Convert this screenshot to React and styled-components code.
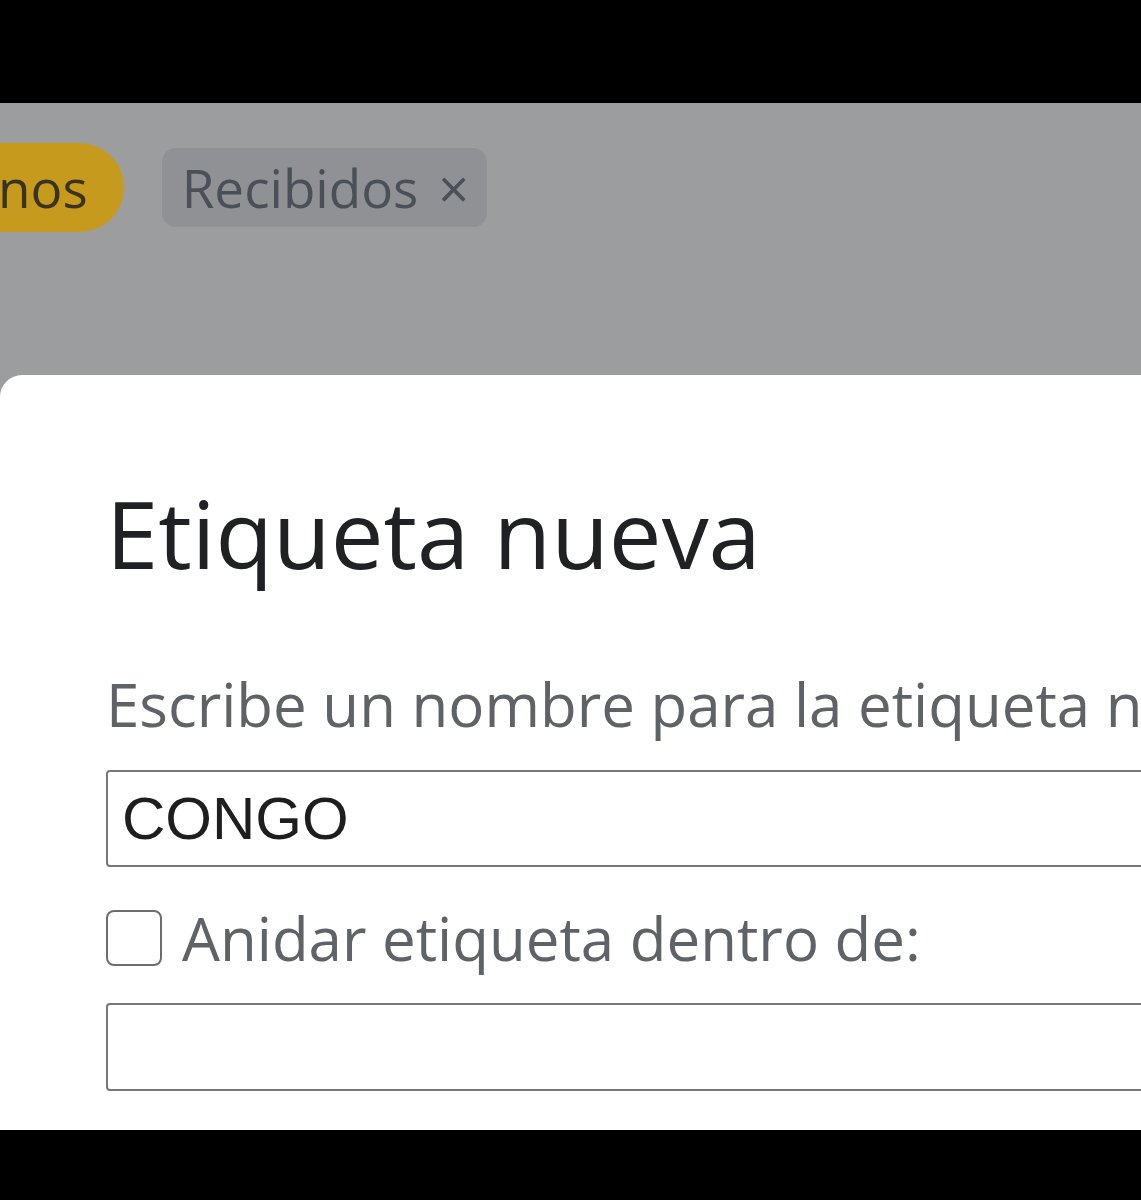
import styled, { createGlobalStyle } from "styled-components";

const GlobalStyle = createGlobalStyle`
  html, body {
    margin: 0;
    padding: 0;
    background: #000;
    overflow: hidden;
  }
`;

export default function App() {
  return (
    <>
      <GlobalStyle />
      <Page>
        <Frame>
          <ChipRow>
            <FilterChip>nos</FilterChip>
            <LabelChip>
              Recibidos <ChipClose>×</ChipClose>
            </LabelChip>
          </ChipRow>
          <Dialog>
            <Title>Etiqueta nueva</Title>
            <Hint>Escribe un nombre para la etiqueta nueva:</Hint>
            <TextField defaultValue="CONGO" />
            <CheckRow>
              <Box type="checkbox" />
              <CheckLabel>Anidar etiqueta dentro de:</CheckLabel>
            </CheckRow>
            <TextField $short />
          </Dialog>
        </Frame>
      </Page>
    </>
  );
}

const Page = styled.div`
  width: 1141px;
  height: 1200px;
  padding-top: 103px;
  box-sizing: border-box;
  background: #000;
`;

const Frame = styled.div`
  height: 1027px;
  overflow: hidden;
  background: #9c9d9f;
  display: flex;
  flex-direction: column;
`;

const ChipRow = styled.div`
  display: flex;
  align-items: center;
  gap: 38px;
  padding-top: 40px;
  height: 89px;
`;

const FilterChip = styled.div`
  height: 89px;
  margin-left: -12px;
  padding: 0 36px 0 10px;
  display: flex;
  align-items: center;
  background: #c69b1d;
  border-radius: 0 45px 45px 0;
  font-family: "Open Sans", sans-serif;
  font-size: 53px;
  color: #3a3322;
`;

const LabelChip = styled.div`
  height: 79px;
  padding: 0 18px 0 20px;
  display: flex;
  align-items: center;
  gap: 20px;
  background: #8f9194;
  border-radius: 14px;
  font-family: "Open Sans", sans-serif;
  font-size: 53px;
  color: #4b5058;
`;

const ChipClose = styled.span`
  font-size: 54px;
  color: #4b5058;
`;

const Dialog = styled.div`
  margin-top: 143px;
  width: 1300px;
  flex: 1;
  background: #fff;
  border-radius: 22px 0 0 0;
  padding: 106px 0 0 106px;
  display: flex;
  flex-direction: column;
  align-items: flex-start;
  box-sizing: border-box;
`;

const Title = styled.h1`
  margin: 0;
  font-family: "Open Sans", sans-serif;
  font-weight: 400;
  font-size: 94px;
  line-height: 104px;
  color: #202124;
  white-space: nowrap;
`;

const Hint = styled.p`
  margin: 84px 0 0;
  font-family: "Open Sans", sans-serif;
  font-size: 60px;
  line-height: 70px;
  color: #5f6368;
  white-space: nowrap;
`;

const TextField = styled.input`
  margin-top: ${(p) => (p.$short ? "37px" : "31px")};
  width: 1100px;
  height: ${(p) => (p.$short ? "88px" : "97px")};
  box-sizing: border-box;
  border: 2px solid #777;
  border-radius: 4px;
  padding: 0 14px;
  font-family: "Liberation Sans", Arial, sans-serif;
  font-size: 60px;
  color: #1e1e1e;
  outline: none;
`;

const CheckRow = styled.div`
  display: flex;
  align-items: center;
  gap: 20px;
  margin-top: 43px;
`;

const Box = styled.input`
  appearance: none;
  margin: 0;
  width: 56px;
  height: 56px;
  border: 2px solid #6d6d6d;
  border-radius: 8px;
  background: #fff;
`;

const CheckLabel = styled.span`
  font-family: "Open Sans", sans-serif;
  font-size: 60px;
  line-height: 56px;
  color: #5f6368;
`;
